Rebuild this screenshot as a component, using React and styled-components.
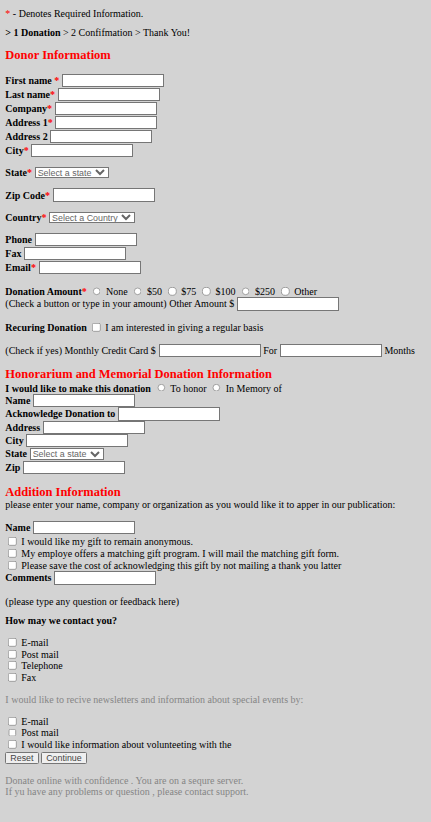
import React from "react";
import styled, { createGlobalStyle } from "styled-components";

const GlobalStyle = createGlobalStyle`
	body {
		margin: 0;
		background: #d3d3d3;
	}
`;

// the whole page is shown at 2/3 scale, like a zoomed-out browser tab
const Page = styled.form`
	zoom: 0.6667;
	padding: 11.5px 8px 30px;
	font-family: "Liberation Serif", "Times New Roman", serif;
	font-size: 15px;
	line-height: 1.107;
	color: #000;
`;

const Text = styled.div`
	margin-top: ${(p) => p.$gap || 0}px;
	color: ${(p) => (p.$muted ? "#858585" : "inherit")};
	font-weight: ${(p) => (p.$bold ? "bold" : "normal")};
	white-space: nowrap;
`;

const Heading = styled.h3`
	margin: ${(p) => p.$gap || 0}px 0 0;
	font-size: 18.72px;
	font-weight: bold;
	line-height: 22px;
	color: #ff0000;
`;

const Req = styled.span`
	color: #ff0000;
`;

const Row = styled.div`
	display: flex;
	align-items: center;
	gap: 4px;
	height: ${(p) => p.$h || 17.7}px;
	margin-top: ${(p) => p.$gap || 0}px;
	white-space: nowrap;
`;

const Label = styled.b``;

const TextInput = styled.input.attrs({ type: "text" })`
	box-sizing: border-box;
	width: 153px;
	height: 20px;
	margin: 0;
	padding: 1px 2px;
	border: 1px solid #767676;
	background: #fff;
	font: 13.33px "Liberation Sans", Arial, sans-serif;
`;

const Select = styled.select`
	box-sizing: border-box;
	width: ${(p) => p.$w}px;
	height: 17px;
	margin: 0;
	font: 13.33px "Liberation Sans", Arial, sans-serif;
	color: #666;
	background: #fff;
	border: 1px solid #767676;
`;

const Radio = styled.input.attrs({ type: "radio" })`
	margin: 0 3px 0 5px;
`;

const Check = styled.input.attrs({ type: "checkbox" })`
	margin: 0 3px 0 4px;
`;

const Button = styled.button`
	height: 18px;
	margin: 0;
	padding: 0 6px;
	font: 13.33px "Liberation Sans", Arial, sans-serif;
	color: #444;
`;

const donorTop = [
	["First name ", true],
	["Last name", true],
	["Company", true],
	["Address 1", true],
	["Address 2", false],
	["City", true],
];

const amounts = ["None", "$50", "$75", "$100", "$250", "Other"];

function Field({ label, req, h = 21, gap, children }) {
	return (
		<Row $h={h} $gap={gap}>
			<Label>
				{label}
				{req && <Req>*</Req>}
			</Label>
			{children || <TextInput />}
		</Row>
	);
}

function CheckLine({ children, gap, h = 17.4 }) {
	return (
		<Row $h={h} $gap={gap}>
			<Check />
			<span>{children}</span>
		</Row>
	);
}

export default function App() {
	return (
		<>
			<GlobalStyle />
			<Page onSubmit={(e) => e.preventDefault()}>
				<Text>
					<Req>*</Req> - Denotes Required Information.
				</Text>
				<Text $gap={13}>
					<b>&gt; 1 Donation</b> &gt; 2 Confifmation &gt; Thank You!
				</Text>

				<Heading $gap={14.5}>Donor Informatiom</Heading>
				{donorTop.map(([label, req], i) => (
					<Field key={label} label={label} req={req} gap={i === 0 ? 16 : 0} />
				))}
				<Field label="State" req gap={12.5}>
					<Select $w={112}>
						<option>Select a state</option>
					</Select>
				</Field>
				<Field label="Zip Code" req gap={12.5} />
				<Field label="Country" req gap={12.5}>
					<Select $w={129}>
						<option>Select a Country</option>
					</Select>
				</Field>
				<Field label="Phone" gap={12.5} />
				<Field label="Fax" />
				<Field label="Email" req />

				<Row $gap={16}>
					<Label>
						Donation Amount<Req>*</Req>
					</Label>
					{amounts.map((a) => (
						<React.Fragment key={a}>
							<Radio name="amount" />
							<span>{a}</span>
						</React.Fragment>
					))}
				</Row>
				<Row $h={20}>
					<span>(Check a button or type in your amount) Other Amount $</span>
					<TextInput />
				</Row>

				<Row $gap={17}>
					<Label>Recuring Donation</Label>
					<Check />
					<span>I am interested in giving a regular basis</span>
				</Row>
				<Row $h={20} $gap={15}>
					<span>(Check if yes) Monthly Credit Card $</span>
					<TextInput />
					<span>For</span>
					<TextInput />
					<span>Months</span>
				</Row>

				<Heading $gap={14.5}>Honorarium and Memorial Donation Information</Heading>
				<Row $gap={1.4}>
					<Label>I would like to make this donation</Label>
					<Radio name="honor" />
					<span>To honor</span>
					<Radio name="honor" />
					<span>In Memory of</span>
				</Row>
				<Field label="Name" h={20} />
				<Field label="Acknowledge Donation to" h={20} />
				<Field label="Address" h={20} />
				<Field label="City" h={20} />
				<Field label="State" h={20}>
					<Select $w={112}>
						<option>Select a state</option>
					</Select>
				</Field>
				<Field label="Zip" h={20} />

				<Heading $gap={16}>Addition Information</Heading>
				<Text>
					please enter your name, company or organization as you would like it to apper in our publication:
				</Text>
				<Field label="Name" h={20} gap={16} />
				<CheckLine h={18} gap={1.5}>I would like my gift to remain anonymous.</CheckLine>
				<CheckLine h={18}>My employe offers a matching gift program. I will mail the matching gift form.</CheckLine>
				<CheckLine h={18}>Please save the cost of acknowledging this gift by not mailing a thank you latter</CheckLine>
				<Field label="Comments" h={20} />
				<Text $gap={16.5}>(please type any question or feedback here)</Text>

				<Text $bold $gap={13}>
					How may we contact you?
				</Text>
				<CheckLine gap={15.5}>E-mail</CheckLine>
				<CheckLine>Post mail</CheckLine>
				<CheckLine>Telephone</CheckLine>
				<CheckLine>Fax</CheckLine>

				<Text $muted $gap={16}>
					I would like to recive newsletters and information about special events by:
				</Text>
				<CheckLine gap={16}>E-mail</CheckLine>
				<CheckLine>Post mail</CheckLine>
				<CheckLine>I would like information about volunteeting with the</CheckLine>
				<Row $h={18} $gap={2}>
					<Button type="reset">Reset</Button>
					<Button type="submit">Continue</Button>
				</Row>

				<Text $muted $gap={17}>
					Donate online with confidence . You are on a sequre server.
				</Text>
				<Text $muted>If yu have any problems or question , please contact support.</Text>
			</Page>
		</>
	);
}
